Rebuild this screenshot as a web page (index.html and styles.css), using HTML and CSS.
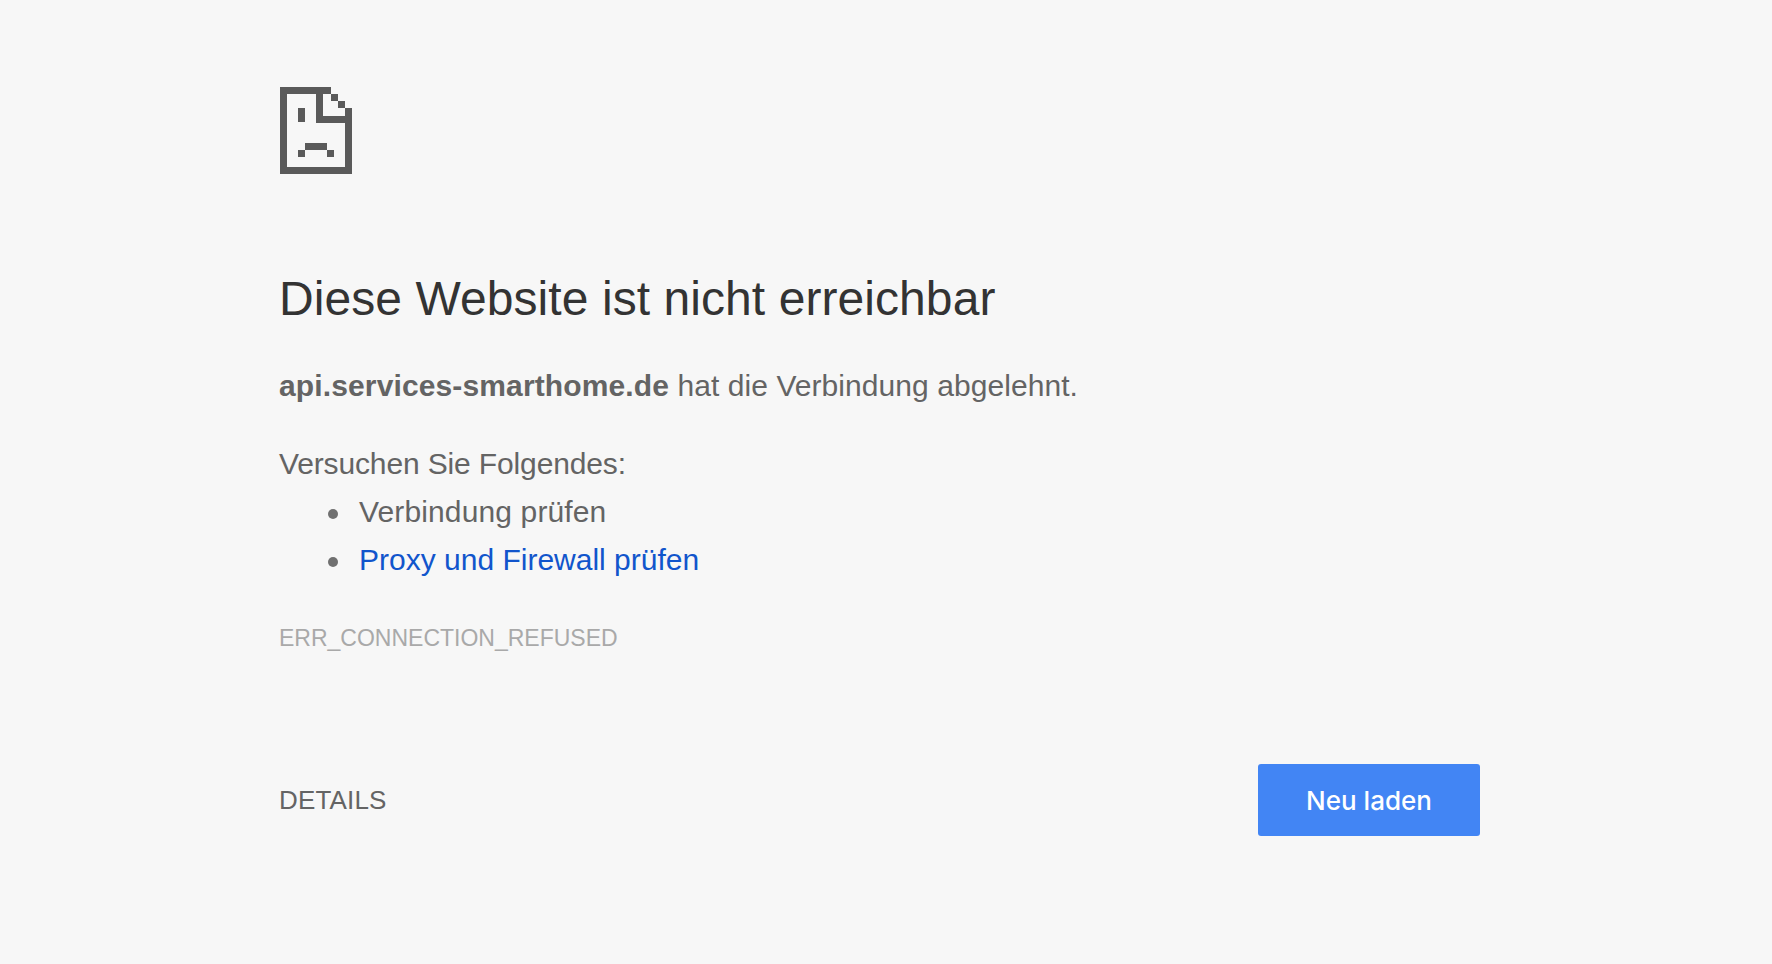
FILE: index.html
```html
<!DOCTYPE html>
<html lang="de">
<head>
<meta charset="utf-8">
<title>api.services-smarthome.de</title>
<link rel="stylesheet" href="styles.css">
</head>
<body>
<main class="page">
  <svg class="icon" width="72" height="87" viewBox="0 0 72 87" aria-hidden="true">
    <path class="icon-ink" d="M0 0H51V7H0ZM0 7H7V87H0ZM7 80H72V87H7ZM65 21H72V80H65ZM36 7H43V36H36ZM43 29H65V36H43ZM51 7H58V14H51ZM58 14H65V21H58ZM18 21H25V35H18ZM25 56H47V63H25ZM18 63H25V70H18ZM47 63H54V70H47Z"/>
  </svg>
  <h1 class="title">Diese Website ist nicht erreichbar</h1>
  <p class="summary"><strong class="host">api.services-smarthome.de</strong> hat die Verbindung abgelehnt.</p>
  <div class="suggestions">
    <p class="suggestions-head">Versuchen Sie Folgendes:</p>
    <ul class="suggestions-list">
      <li class="suggestion">Verbindung prüfen</li>
      <li class="suggestion"><a class="link" href="#">Proxy und Firewall prüfen</a></li>
    </ul>
  </div>
  <div class="code">ERR_CONNECTION_REFUSED</div>
  <div class="actions">
    <button class="details" type="button">DETAILS</button>
    <button class="reload" type="button">Neu laden</button>
  </div>
</main>
</body>
</html>
```
FILE: styles.css
```css
html, body {
  margin: 0;
  height: 100%;
}
body {
  background: #f7f7f7;
  color: #646464;
  font-family: "Liberation Sans", Arial, sans-serif;
  font-size: 30px;
  overflow: hidden;
}
.page {
  width: 1201px;
  margin-left: 279px;
  padding-top: 87px;
}
.icon {
  display: block;
  margin-left: 1px;
}
.icon-ink {
  fill: #5a5a5a;
}
.title {
  margin: 97px 0 0;
  color: #333333;
  font-size: 48px;
  font-weight: 400;
  line-height: 56px;
  letter-spacing: 0.07px;
}
.summary {
  margin: 35px 0 0;
  line-height: 48px;
  letter-spacing: 0.06px;
}
.host {
  letter-spacing: 0.13px;
}
.suggestions {
  margin-top: 30px;
}
.suggestions-head {
  margin: 0;
  line-height: 48px;
  letter-spacing: -0.14px;
}
.suggestions-list {
  margin: 0;
  padding-left: 49px;
  list-style: none;
  line-height: 48px;
}
.suggestion {
  display: flex;
  align-items: center;
  gap: 21px;
}
.suggestion::before {
  content: "";
  flex: none;
  width: 10px;
  height: 10px;
  margin-top: 3px;
  border-radius: 50%;
  background: #707070;
}
.suggestion:first-child {
  letter-spacing: 0.13px;
}
.link {
  color: #1155cc;
  text-decoration: none;
}
.code {
  margin-top: 38px;
  color: #a9a9a9;
  font-size: 23px;
  line-height: 32px;
}
.actions {
  display: flex;
  justify-content: space-between;
  align-items: center;
  margin-top: 110px;
}
.details {
  padding: 0;
  border: 0;
  background: none;
  color: #646464;
  font-family: "Liberation Sans", Arial, sans-serif;
  font-size: 26px;
  letter-spacing: 0.15px;
}
.reload {
  width: 222px;
  height: 72px;
  padding: 0;
  border: 0;
  border-radius: 3px;
  background: #4285f4;
  color: #ffffff;
  font-family: Inter, "Liberation Sans", sans-serif;
  font-size: 26px;
  font-weight: 500;
}
```
